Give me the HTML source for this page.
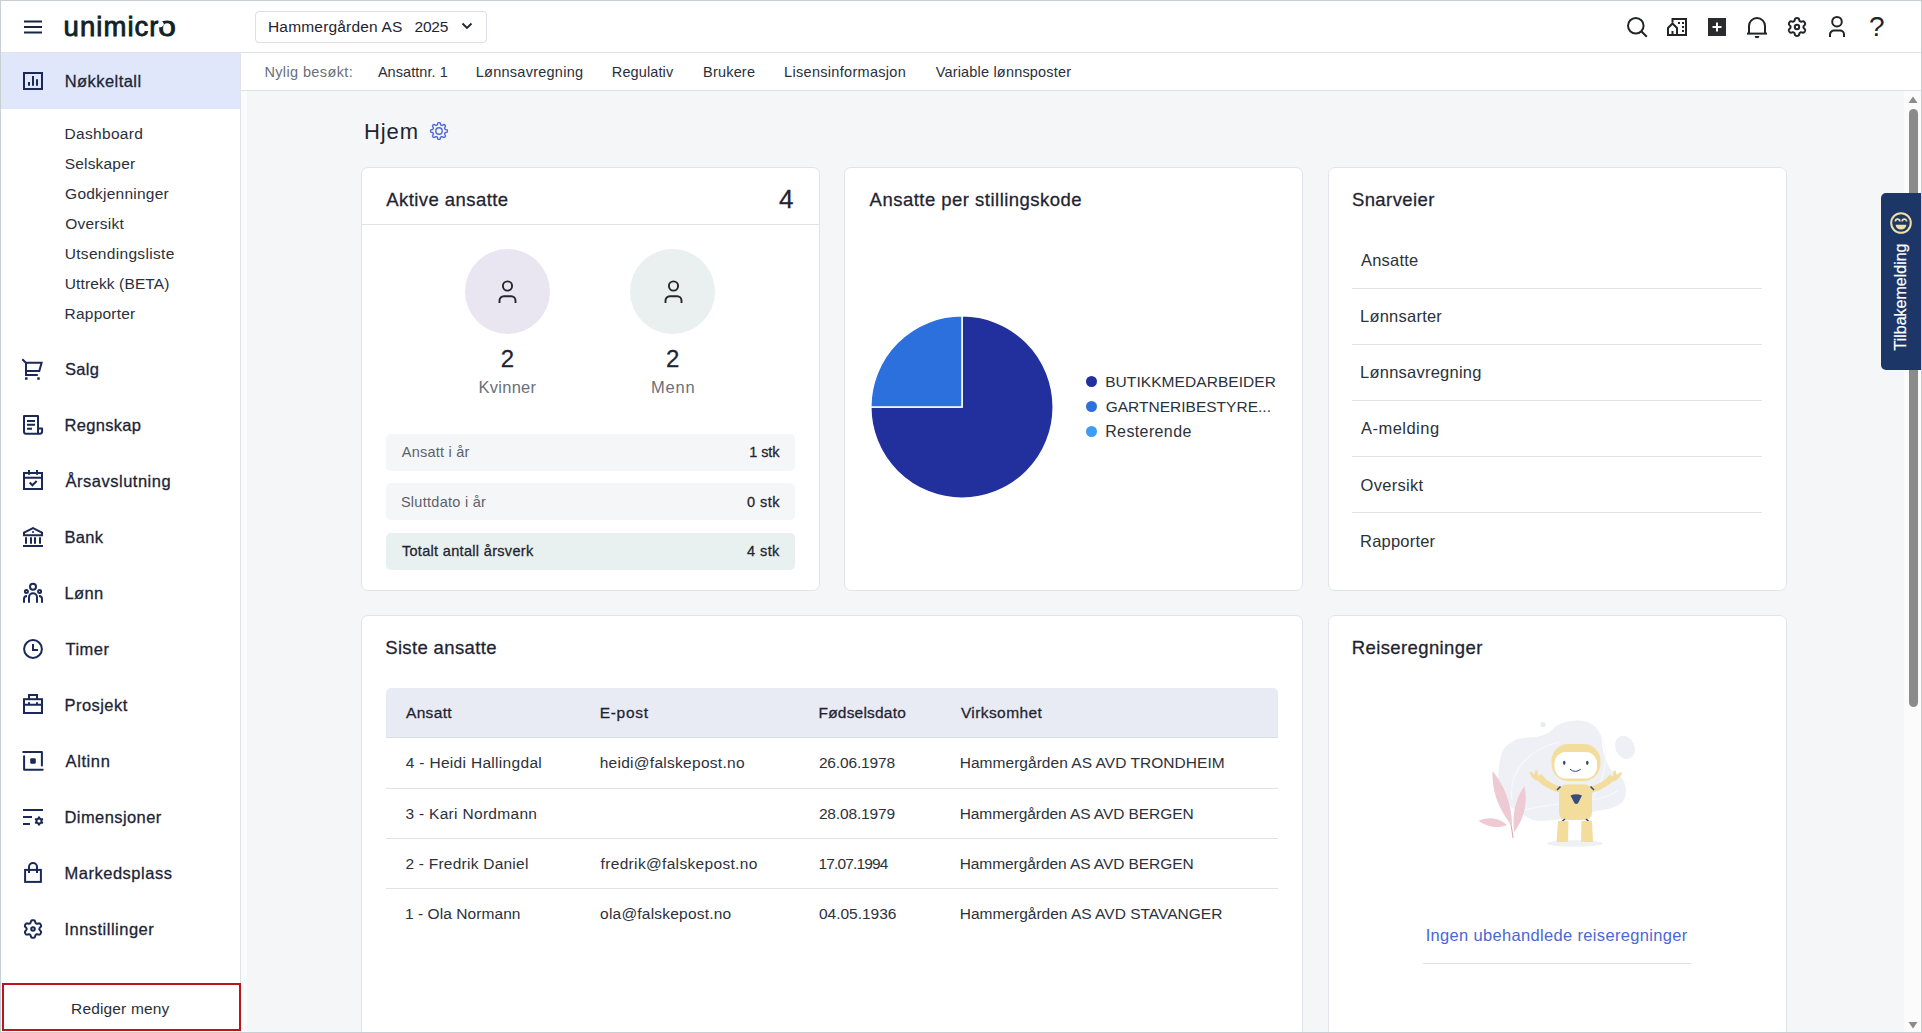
<!DOCTYPE html>
<html lang="no">
<head>
<meta charset="utf-8">
<title>Unimicro – Hjem</title>
<style>
*{box-sizing:border-box;margin:0;padding:0}
html,body{width:1922px;height:1033px;overflow:hidden;background:#fff}
body{font-family:"Liberation Sans",sans-serif;color:#1f2430}
#app{position:relative;width:1922px;height:1033px;overflow:hidden;background:#f5f6f8}
.abs,.t,svg.i{position:absolute}
.t{white-space:pre;line-height:1;font-weight:400;text-decoration:none;display:block}
h1.t{font-weight:400}
ul{list-style:none}
table{border-collapse:collapse}
th,td{padding:0;font-weight:400}
svg.i{overflow:visible}
.nv{fill:none;stroke:#1a2957;stroke-width:2}
.nf{fill:#1a2957;stroke:none}
.tb{fill:none;stroke:#222426;stroke-width:2}
.card{position:absolute;background:#fff;border:1px solid #e1e5ea;border-radius:7px}
.row{position:absolute;left:386px;width:409px;height:37px;border-radius:5px;background:#f5f6f8}
.hl{position:absolute;height:1px;background:#dfe3e8}
</style>
</head>
<body>
<div id="app">

<!-- ============ top bar ============ -->
<header class="abs" style="left:0;top:0;width:1922px;height:53px;background:#fff;border-bottom:1px solid #e0e3e7">
  <svg class="i" style="left:23px;top:20px" width="20" height="14" viewBox="0 0 20 14"><path d="M1 1.5h18M1 7h18M1 12.5h18" fill="none" stroke="#1a2540" stroke-width="2"/></svg>
  <span class="t" id="logo" style="left:63.600px;top:13px;font-size:27.500px;color:#0f2228;letter-spacing:1.050px;-webkit-text-stroke:0.850px #0f2228">unimicr<span style="display:inline-block;transform:translateX(-1.800px) scale(1.150,1.030);transform-origin:0 78%">o</span></span>
  <div class="abs" style="left:158.300px;top:21.600px;width:5.600px;height:5.400px;border-radius:50%;background:#fff;transform:rotate(-35deg)"></div>
  <div class="abs" style="left:255px;top:11px;width:232px;height:32px;border:1px solid #dcdfe4;border-radius:4px;background:#fff"></div>
  <span class="t" style="left:268.0px;top:19px;font-size:15.5px;color:#1f2430;letter-spacing:0.18px;">Hammergården AS</span>
<span class="t" style="left:414.6px;top:19px;font-size:15.5px;color:#1f2430;letter-spacing:-0.26px;">2025</span>
  <svg class="i" style="left:461px;top:22px" width="12" height="8" viewBox="0 0 12 8"><path d="M1.5 1.5 6 6l4.500-4.500" fill="none" stroke="#1f2430" stroke-width="1.8"/></svg>

  <!-- search -->
  <svg class="i" style="left:1626px;top:16px" width="22" height="22" viewBox="0 0 22 22"><circle cx="9.800" cy="9.800" r="7.800" class="tb"/><path d="M15.300 15.300 20.800 20.800" class="tb"/></svg>
  <!-- company -->
  <svg class="i" style="left:1666px;top:17px" width="22" height="20" viewBox="0 0 22 20"><path d="M6.500 5.500V2H20V18H11" class="tb"/><path d="M2 18V11L6.500 6.500 11 11V18Z" class="tb"/><path d="M5.500 18v-4h2v4z" fill="#222426"/><path d="M12 5h2v2h-2zM16 5h2v2h-2zM16 9h2v2h-2zM16 13h2v2h-2z" fill="#222426"/></svg>
  <!-- add box -->
  <svg class="i" style="left:1708px;top:18px" width="18" height="18" viewBox="0 0 18 18"><rect width="18" height="18" fill="#2a2b2d"/><path d="M9 4.500v9M4.500 9h9" stroke="#fff" stroke-width="2" fill="none"/></svg>
  <!-- bell -->
  <svg class="i" style="left:1746px;top:16px" width="22" height="23" viewBox="0 0 22 23"><path d="M3 17.600V10a8 8 0 0 1 16 0v7.600" class="tb"/><path d="M1 17.600h20" class="tb"/><path d="M8.600 20h4.800a2.400 2.200 0 0 1-4.800 0z" fill="#222426"/></svg>
  <!-- gear -->
  <svg class="i" style="left:1787px;top:17px" width="20" height="20" viewBox="-10 -10 20 20"><path d="M6.40 -0.00L6.42 -0.28L6.48 -0.57L6.61 -0.87L6.87 -1.21L7.27 -1.61L7.71 -2.07L8.02 -2.53L8.15 -2.96L8.13 -3.37L8.03 -3.75L7.89 -4.11L7.71 -4.45L7.50 -4.78L7.26 -5.08L6.98 -5.36L6.64 -5.57L6.20 -5.68L5.64 -5.64L5.03 -5.49L4.49 -5.35L4.06 -5.29L3.73 -5.33L3.45 -5.42L3.20 -5.54L2.97 -5.70L2.75 -5.89L2.55 -6.16L2.39 -6.56L2.24 -7.10L2.07 -7.71L1.82 -8.21L1.51 -8.54L1.15 -8.73L0.77 -8.83L0.39 -8.88L0.00 -8.90L-0.39 -8.88L-0.77 -8.83L-1.15 -8.73L-1.51 -8.54L-1.82 -8.21L-2.07 -7.71L-2.24 -7.10L-2.39 -6.56L-2.55 -6.16L-2.75 -5.89L-2.97 -5.70L-3.20 -5.54L-3.45 -5.42L-3.73 -5.33L-4.06 -5.29L-4.49 -5.35L-5.03 -5.49L-5.64 -5.64L-6.20 -5.68L-6.64 -5.57L-6.98 -5.36L-7.26 -5.08L-7.50 -4.78L-7.71 -4.45L-7.89 -4.11L-8.03 -3.75L-8.13 -3.37L-8.15 -2.96L-8.02 -2.53L-7.71 -2.07L-7.27 -1.61L-6.87 -1.21L-6.61 -0.87L-6.48 -0.57L-6.42 -0.28L-6.40 -0.00L-6.42 0.28L-6.48 0.57L-6.61 0.87L-6.87 1.21L-7.27 1.61L-7.71 2.07L-8.02 2.53L-8.15 2.96L-8.13 3.37L-8.03 3.75L-7.89 4.11L-7.71 4.45L-7.50 4.78L-7.26 5.08L-6.98 5.36L-6.64 5.57L-6.20 5.68L-5.64 5.64L-5.03 5.49L-4.49 5.35L-4.06 5.29L-3.73 5.33L-3.45 5.42L-3.20 5.54L-2.97 5.70L-2.75 5.89L-2.55 6.16L-2.39 6.56L-2.24 7.10L-2.07 7.71L-1.82 8.21L-1.51 8.54L-1.15 8.73L-0.77 8.83L-0.39 8.88L-0.00 8.90L0.39 8.88L0.77 8.83L1.15 8.73L1.51 8.54L1.82 8.21L2.07 7.71L2.24 7.10L2.39 6.56L2.55 6.16L2.75 5.89L2.97 5.70L3.20 5.54L3.45 5.42L3.73 5.33L4.06 5.29L4.49 5.35L5.03 5.49L5.64 5.64L6.20 5.68L6.64 5.57L6.98 5.36L7.26 5.08L7.50 4.78L7.71 4.45L7.89 4.11L8.03 3.75L8.13 3.37L8.15 2.96L8.02 2.53L7.71 2.07L7.27 1.61L6.87 1.21L6.61 0.87L6.48 0.57L6.42 0.28Z" class="tb" stroke-linejoin="round"/><circle r="2.200" class="tb"/></svg>
  <!-- user -->
  <svg class="i" style="left:1828px;top:15px" width="18" height="23" viewBox="0 0 18 23"><circle cx="9" cy="6.700" r="4.800" class="tb"/><path d="M2 22v-2.500a4 4 0 0 1 4-4h6a4 4 0 0 1 4 4V22" class="tb"/></svg>
  <!-- help -->
  <span class="t" style="left:1869px;top:12.500px;font-size:28px;color:#222426">?</span>
</header>

<!-- ============ sidebar ============ -->
<nav class="abs" style="left:0;top:0;width:241px;height:1033px">
  <div class="abs" style="left:0;top:53px;width:241px;height:980px;background:#fff;border-right:1px solid #e0e4e9"></div>
  <div class="abs" style="left:0;top:53px;width:240px;height:56px;background:#e0e7fb"></div>
  <svg class="i" style="left:23px;top:72px" width="20" height="18" viewBox="0 0 20 18"><rect x="1" y="1" width="18" height="16" class="nv"/><path d="M5 10h2v3.800H5zM9 4h2v9.800H9zM13 7.200h2v6.600h-2z" class="nf"/></svg>
  <span class="t" style="left:64.7px;top:73px;font-size:16.5px;color:#1c2436;letter-spacing:0.44px;-webkit-text-stroke:0.28px currentColor;">Nøkkeltall</span>
  <ul>
  <li><a class="t" style="left:64.6px;top:126px;font-size:15.5px;color:#2a2f3a;letter-spacing:0.30px;">Dashboard</a></li>
<li><a class="t" style="left:64.7px;top:156px;font-size:15.5px;color:#2a2f3a;letter-spacing:0.19px;">Selskaper</a></li>
<li><a class="t" style="left:65.1px;top:186px;font-size:15.5px;color:#2a2f3a;letter-spacing:0.23px;">Godkjenninger</a></li>
<li><a class="t" style="left:65.2px;top:216px;font-size:15.5px;color:#2a2f3a;letter-spacing:0.24px;">Oversikt</a></li>
<li><a class="t" style="left:64.7px;top:246px;font-size:15.5px;color:#2a2f3a;letter-spacing:0.32px;">Utsendingsliste</a></li>
<li><a class="t" style="left:64.7px;top:276px;font-size:15.5px;color:#2a2f3a;letter-spacing:0.13px;">Uttrekk (BETA)</a></li>
<li><a class="t" style="left:64.6px;top:306px;font-size:15.5px;color:#2a2f3a;letter-spacing:0.20px;">Rapporter</a></li>
  </ul>
  <ul>
  <li><a class="t" style="left:65.0px;top:361px;font-size:16.5px;color:#1c2436;letter-spacing:0.32px;-webkit-text-stroke:0.28px currentColor;">Salg</a></li>
<li><a class="t" style="left:64.5px;top:417px;font-size:16.5px;color:#1c2436;letter-spacing:0.31px;-webkit-text-stroke:0.28px currentColor;">Regnskap</a></li>
<li><a class="t" style="left:65.6px;top:473px;font-size:16.5px;color:#1c2436;letter-spacing:0.50px;-webkit-text-stroke:0.28px currentColor;">Årsavslutning</a></li>
<li><a class="t" style="left:64.5px;top:529px;font-size:16.5px;color:#1c2436;letter-spacing:0.29px;-webkit-text-stroke:0.28px currentColor;">Bank</a></li>
<li><a class="t" style="left:64.5px;top:585px;font-size:16.5px;color:#1c2436;letter-spacing:0.34px;-webkit-text-stroke:0.28px currentColor;">Lønn</a></li>
<li><a class="t" style="left:65.5px;top:641px;font-size:16.5px;color:#1c2436;letter-spacing:0.49px;-webkit-text-stroke:0.28px currentColor;">Timer</a></li>
<li><a class="t" style="left:64.5px;top:697px;font-size:16.5px;color:#1c2436;letter-spacing:0.45px;-webkit-text-stroke:0.28px currentColor;">Prosjekt</a></li>
<li><a class="t" style="left:65.6px;top:753px;font-size:16.5px;color:#1c2436;letter-spacing:0.59px;-webkit-text-stroke:0.28px currentColor;">Altinn</a></li>
<li><a class="t" style="left:64.5px;top:809px;font-size:16.5px;color:#1c2436;letter-spacing:0.41px;-webkit-text-stroke:0.28px currentColor;">Dimensjoner</a></li>
<li><a class="t" style="left:64.5px;top:865px;font-size:16.5px;color:#1c2436;letter-spacing:0.51px;-webkit-text-stroke:0.28px currentColor;">Markedsplass</a></li>
<li><a class="t" style="left:64.4px;top:921px;font-size:16.5px;color:#1c2436;letter-spacing:0.49px;-webkit-text-stroke:0.28px currentColor;">Innstillinger</a></li>
  </ul>
  <!-- Salg -->
  <svg class="i" style="left:21px;top:358px" width="23" height="23" viewBox="0 0 23 23"><path d="M1.300 1.300 4.800 4.800H20.600L18.300 12.900H5V17H16.800" class="nv"/><path d="M5 4.800V13" class="nv"/><rect x="4" y="19.200" width="2.600" height="2.600" rx=".6" class="nf"/><rect x="16.200" y="19.200" width="2.600" height="2.600" rx=".6" class="nf"/></svg>
  <!-- Regnskap -->
  <svg class="i" style="left:22px;top:414px" width="22" height="22" viewBox="0 0 22 22"><path d="M16 19.800V2H2V17.800a2 2 0 0 0 2 2H17.600a2.500 2.500 0 0 0 2.500-2.500V14.500H16" class="nv" stroke-linejoin="round"/><path d="M5 6.900h8M5 10.800h8M5 14.800h5" class="nv"/></svg>
  <!-- Arsavslutning -->
  <svg class="i" style="left:22px;top:469px" width="22" height="22" viewBox="0 0 22 22"><rect x="2" y="4" width="18" height="16" class="nv"/><path d="M2 8.800h18M7 .900v4.800M15 .900v4.800" class="nv"/><path d="M7.700 13.500 10.400 16.300 14.700 12" class="nv" stroke-width="1.800"/></svg>
  <!-- Bank -->
  <svg class="i" style="left:22px;top:526px" width="22" height="22" viewBox="0 0 22 22"><path d="M2 9.200V6.500L11 2 20 6.500V9.200Z" class="nv"/><circle cx="11" cy="6" r="1" class="nf"/><path d="M4 11.200v6.500M9 11.200v6.500M13 11.200v6.500M18 11.200v6.500" class="nv"/><path d="M1 20h20" class="nv"/></svg>
  <!-- Lonn -->
  <svg class="i" style="left:22px;top:582px" width="22" height="22" viewBox="0 0 22 22"><circle cx="11" cy="4.800" r="3" class="nv"/><circle cx="4.400" cy="9.400" r="1.500" class="nv" stroke-width="1.700"/><circle cx="17.600" cy="9.400" r="1.500" class="nv" stroke-width="1.700"/><path d="M7 20.800V15.200a4 4 0 0 1 8 0V20.800" class="nv"/><path d="M2 20.800V17a3 3 0 0 1 3-3M20 20.800V17a3 3 0 0 0-3-3" class="nv"/></svg>
  <!-- Timer -->
  <svg class="i" style="left:22px;top:638px" width="22" height="22" viewBox="0 0 22 22"><circle cx="11" cy="11" r="8.900" class="nv"/><path d="M11 6v6.100h5" class="nv"/></svg>
  <!-- Prosjekt -->
  <svg class="i" style="left:22px;top:693px" width="22" height="22" viewBox="0 0 22 22"><rect x="2" y="6.200" width="18" height="13.800" class="nv"/><path d="M7 6.200V2.100h8v4.100" class="nv"/><path d="M2 11.800h18M7 9.300v2.500M15 9.300v2.500" class="nv"/></svg>
  <!-- Altinn -->
  <svg class="i" style="left:22px;top:750px" width="22" height="22" viewBox="0 0 22 22"><path d="M1.200 2H19.900V15.600" class="nv" stroke-linecap="round" stroke-linejoin="round"/><path d="M2.100 6.200V19.700H20.700" class="nv" stroke-linecap="round" stroke-linejoin="round"/><rect x="8.200" y="8.200" width="5.600" height="5.600" rx="1.200" class="nf"/></svg>
  <!-- Dimensjoner -->
  <svg class="i" style="left:22px;top:808px" width="23" height="20" viewBox="0 0 23 20"><path d="M1 2h20M1 9h9M1 16h7" class="nv"/><g transform="translate(17 13)"><path d="M3.45 -0.00L3.46 -0.15L3.49 -0.30L3.54 -0.47L3.63 -0.64L3.76 -0.83L3.91 -1.05L4.05 -1.28L4.15 -1.51L4.18 -1.73L4.17 -1.94L4.11 -2.14L4.03 -2.32L3.91 -2.49L3.77 -2.64L3.59 -2.76L3.38 -2.84L3.13 -2.87L2.86 -2.86L2.60 -2.84L2.37 -2.82L2.17 -2.83L2.01 -2.87L1.86 -2.92L1.73 -2.99L1.60 -3.07L1.48 -3.17L1.37 -3.30L1.26 -3.46L1.16 -3.67L1.05 -3.91L0.92 -4.15L0.77 -4.35L0.59 -4.49L0.40 -4.58L0.20 -4.63L0.00 -4.65L-0.20 -4.63L-0.40 -4.58L-0.59 -4.49L-0.77 -4.35L-0.92 -4.15L-1.05 -3.91L-1.16 -3.67L-1.26 -3.46L-1.37 -3.30L-1.48 -3.17L-1.60 -3.07L-1.72 -2.99L-1.86 -2.92L-2.01 -2.87L-2.17 -2.83L-2.37 -2.82L-2.60 -2.84L-2.86 -2.86L-3.13 -2.87L-3.38 -2.84L-3.59 -2.76L-3.77 -2.64L-3.91 -2.49L-4.03 -2.33L-4.11 -2.14L-4.17 -1.94L-4.18 -1.73L-4.15 -1.51L-4.05 -1.28L-3.91 -1.05L-3.76 -0.83L-3.63 -0.64L-3.54 -0.47L-3.49 -0.30L-3.46 -0.15L-3.45 -0.00L-3.46 0.15L-3.49 0.30L-3.54 0.47L-3.63 0.64L-3.76 0.83L-3.91 1.05L-4.05 1.28L-4.15 1.51L-4.18 1.73L-4.17 1.94L-4.11 2.14L-4.03 2.33L-3.91 2.49L-3.77 2.64L-3.59 2.76L-3.38 2.84L-3.13 2.87L-2.86 2.86L-2.60 2.84L-2.37 2.82L-2.17 2.83L-2.01 2.87L-1.86 2.92L-1.73 2.99L-1.60 3.07L-1.48 3.17L-1.37 3.30L-1.26 3.46L-1.16 3.67L-1.05 3.91L-0.92 4.15L-0.77 4.35L-0.59 4.49L-0.40 4.58L-0.20 4.63L-0.00 4.65L0.20 4.63L0.40 4.58L0.59 4.49L0.77 4.35L0.92 4.15L1.05 3.91L1.16 3.67L1.26 3.46L1.37 3.30L1.48 3.17L1.60 3.07L1.72 2.99L1.86 2.92L2.01 2.87L2.17 2.83L2.37 2.82L2.60 2.84L2.86 2.86L3.13 2.87L3.38 2.84L3.59 2.76L3.77 2.64L3.91 2.49L4.03 2.32L4.11 2.14L4.17 1.94L4.18 1.73L4.15 1.51L4.05 1.28L3.91 1.05L3.76 0.83L3.63 0.64L3.54 0.47L3.49 0.30L3.46 0.15ZM1.55 0A1.55 1.55 0 1 0 -1.55 0A1.55 1.55 0 1 0 1.55 0Z" class="nf" fill-rule="evenodd"/></g></svg>
  <!-- Markedsplass -->
  <svg class="i" style="left:22px;top:861px" width="22" height="23" viewBox="0 0 22 23"><rect x="3.100" y="8.900" width="15.800" height="12" class="nv"/><path d="M7 12V6.100a4 4 0 0 1 8 0V12" class="nv"/></svg>
  <!-- Innstillinger -->
  <svg class="i" style="left:23px;top:919px" width="20" height="20" viewBox="-10 -10 20 20"><path d="M6.35 -0.00L6.37 -0.28L6.43 -0.56L6.56 -0.86L6.82 -1.20L7.22 -1.60L7.66 -2.05L7.97 -2.51L8.10 -2.95L8.09 -3.35L7.99 -3.73L7.84 -4.08L7.66 -4.42L7.46 -4.75L7.22 -5.06L6.94 -5.33L6.60 -5.54L6.16 -5.65L5.61 -5.61L5.00 -5.45L4.45 -5.31L4.03 -5.25L3.70 -5.28L3.42 -5.37L3.18 -5.50L2.94 -5.65L2.73 -5.85L2.53 -6.12L2.37 -6.51L2.22 -7.05L2.05 -7.66L1.81 -8.16L1.50 -8.49L1.14 -8.68L0.77 -8.78L0.39 -8.83L0.00 -8.85L-0.39 -8.83L-0.77 -8.78L-1.14 -8.68L-1.50 -8.49L-1.81 -8.16L-2.05 -7.66L-2.22 -7.05L-2.37 -6.51L-2.53 -6.12L-2.73 -5.85L-2.94 -5.65L-3.17 -5.50L-3.42 -5.37L-3.70 -5.28L-4.03 -5.25L-4.45 -5.31L-5.00 -5.45L-5.61 -5.61L-6.16 -5.65L-6.60 -5.54L-6.94 -5.33L-7.22 -5.06L-7.46 -4.75L-7.66 -4.43L-7.84 -4.08L-7.99 -3.73L-8.09 -3.35L-8.10 -2.95L-7.97 -2.51L-7.66 -2.05L-7.22 -1.60L-6.82 -1.20L-6.56 -0.86L-6.43 -0.56L-6.37 -0.28L-6.35 -0.00L-6.37 0.28L-6.43 0.56L-6.56 0.86L-6.82 1.20L-7.22 1.60L-7.66 2.05L-7.97 2.51L-8.10 2.95L-8.09 3.35L-7.99 3.73L-7.84 4.08L-7.66 4.43L-7.46 4.75L-7.22 5.06L-6.94 5.33L-6.60 5.54L-6.16 5.65L-5.61 5.61L-5.00 5.45L-4.45 5.31L-4.03 5.25L-3.70 5.28L-3.42 5.37L-3.18 5.50L-2.94 5.65L-2.73 5.85L-2.53 6.12L-2.37 6.51L-2.22 7.05L-2.05 7.66L-1.81 8.16L-1.50 8.49L-1.14 8.68L-0.77 8.78L-0.39 8.83L-0.00 8.85L0.39 8.83L0.77 8.78L1.14 8.68L1.50 8.49L1.81 8.16L2.05 7.66L2.22 7.05L2.37 6.51L2.53 6.12L2.73 5.85L2.94 5.65L3.17 5.50L3.42 5.37L3.70 5.28L4.03 5.25L4.45 5.31L5.00 5.45L5.61 5.61L6.16 5.65L6.60 5.54L6.94 5.33L7.22 5.06L7.46 4.75L7.66 4.42L7.84 4.08L7.99 3.73L8.09 3.35L8.10 2.95L7.97 2.51L7.66 2.05L7.22 1.60L6.82 1.20L6.56 0.86L6.43 0.56L6.37 0.28Z" class="nv" stroke-linejoin="round"/><circle r="1.800" class="nv" stroke-width="1.800"/></svg>

  <div class="abs" style="left:2px;top:983px;width:239px;height:48px;border:2px solid #b9151b;background:#fff"></div>
  <span class="t" style="left:71.1px;top:1001px;font-size:15.5px;color:#2a2f3a;letter-spacing:0.15px;">Rediger meny</span>
</nav>

<!-- ============ recent bar ============ -->
<div class="abs" id="recent" style="left:0;top:0">
<div class="abs" style="left:241px;top:53px;width:1681px;height:38px;background:#fff;border-bottom:1px solid #dde0e4"></div>
<span class="t" style="left:264.4px;top:65px;font-size:14.5px;color:#6a6f78;letter-spacing:0.38px;">Nylig besøkt:</span>
<a class="t" style="left:377.9px;top:65px;font-size:14.5px;color:#2a2f3a;letter-spacing:0.06px;">Ansattnr. 1</a>
<a class="t" style="left:475.8px;top:65px;font-size:14.5px;color:#2a2f3a;letter-spacing:0.25px;">Lønnsavregning</a>
<a class="t" style="left:611.8px;top:65px;font-size:14.5px;color:#2a2f3a;letter-spacing:0.11px;">Regulativ</a>
<a class="t" style="left:703.1px;top:65px;font-size:14.5px;color:#2a2f3a;letter-spacing:0.18px;">Brukere</a>
<a class="t" style="left:784.1px;top:65px;font-size:14.5px;color:#2a2f3a;letter-spacing:0.30px;">Lisensinformasjon</a>
<a class="t" style="left:935.7px;top:65px;font-size:14.5px;color:#2a2f3a;letter-spacing:0.18px;">Variable lønnsposter</a>
</div>

<div class="abs" style="left:241px;top:91px;width:6px;height:942px;background:#fafbfc"></div>
<!-- ============ main ============ -->
<main class="abs" style="left:0;top:0">
  <h1 class="t" style="left:364.0px;top:121px;font-size:22px;color:#1f2430;letter-spacing:0.90px;">Hjem</h1>
  <svg class="i" style="left:429px;top:121px" width="20" height="20" viewBox="-10 -10 20 20"><path d="M8.40 -0.00L8.38 -0.37L8.32 -0.73L8.13 -1.07L7.59 -1.34L6.73 -1.49L6.18 -1.66L5.96 -1.88L5.83 -2.12L5.73 -2.37L5.63 -2.62L5.54 -2.88L5.54 -3.20L5.81 -3.70L6.32 -4.42L6.51 -4.99L6.40 -5.37L6.19 -5.67L5.94 -5.94L5.67 -6.19L5.37 -6.40L4.99 -6.51L4.42 -6.32L3.70 -5.81L3.20 -5.54L2.88 -5.54L2.62 -5.63L2.37 -5.73L2.12 -5.83L1.88 -5.96L1.66 -6.18L1.49 -6.73L1.34 -7.59L1.07 -8.13L0.73 -8.32L0.37 -8.38L0.00 -8.40L-0.37 -8.38L-0.73 -8.32L-1.07 -8.13L-1.34 -7.59L-1.49 -6.73L-1.66 -6.18L-1.88 -5.96L-2.12 -5.83L-2.37 -5.73L-2.62 -5.63L-2.88 -5.54L-3.20 -5.54L-3.70 -5.81L-4.42 -6.32L-4.99 -6.51L-5.37 -6.40L-5.67 -6.19L-5.94 -5.94L-6.19 -5.67L-6.40 -5.37L-6.51 -4.99L-6.32 -4.42L-5.81 -3.70L-5.54 -3.20L-5.54 -2.88L-5.63 -2.62L-5.73 -2.37L-5.83 -2.12L-5.96 -1.88L-6.18 -1.66L-6.73 -1.49L-7.59 -1.34L-8.13 -1.07L-8.32 -0.73L-8.38 -0.37L-8.40 -0.00L-8.38 0.37L-8.32 0.73L-8.13 1.07L-7.59 1.34L-6.73 1.49L-6.18 1.66L-5.96 1.88L-5.83 2.12L-5.73 2.37L-5.63 2.62L-5.54 2.88L-5.54 3.20L-5.81 3.70L-6.32 4.42L-6.51 4.99L-6.40 5.37L-6.19 5.67L-5.94 5.94L-5.67 6.19L-5.37 6.40L-4.99 6.51L-4.42 6.32L-3.70 5.81L-3.20 5.54L-2.88 5.54L-2.62 5.63L-2.37 5.73L-2.12 5.83L-1.88 5.96L-1.66 6.18L-1.49 6.73L-1.34 7.59L-1.07 8.13L-0.73 8.32L-0.37 8.38L-0.00 8.40L0.37 8.38L0.73 8.32L1.07 8.13L1.34 7.59L1.49 6.73L1.66 6.18L1.88 5.96L2.12 5.83L2.37 5.73L2.62 5.63L2.88 5.54L3.20 5.54L3.70 5.81L4.42 6.32L4.99 6.51L5.37 6.40L5.67 6.19L5.94 5.94L6.19 5.67L6.40 5.37L6.51 4.99L6.32 4.42L5.81 3.70L5.54 3.20L5.54 2.88L5.63 2.62L5.73 2.37L5.83 2.12L5.96 1.88L6.18 1.66L6.73 1.49L7.59 1.34L8.13 1.07L8.32 0.73L8.38 0.37Z" fill="none" stroke="#5468d4" stroke-width="1.400" stroke-linejoin="round"/><circle r="3.200" fill="none" stroke="#5468d4" stroke-width="1.400"/></svg>

  <!-- card 1 -->
  <section class="card" style="left:361px;top:167px;width:459px;height:424px"></section>
  <div class="hl" style="left:362px;top:224px;width:457px"></div>
  <span class="t" style="left:386.2px;top:191px;font-size:18.5px;color:#1f2430;letter-spacing:0.44px;-webkit-text-stroke:0.28px currentColor;">Aktive ansatte</span>
<span class="t" style="left:779.1px;top:186px;font-size:26px;color:#1f2430;-webkit-text-stroke:0.28px currentColor;">4</span>
  <div class="abs" style="left:465px;top:249px;width:85px;height:85px;border-radius:50%;background:#e9e5f1"></div>
  <div class="abs" style="left:630px;top:249px;width:85px;height:85px;border-radius:50%;background:#e9f0ef"></div>
  <svg class="i" style="left:498px;top:280px" width="19" height="24" viewBox="0 0 19 24"><circle cx="9.500" cy="6" r="4.600" fill="none" stroke="#25272b" stroke-width="1.900"/><path d="M1.500 23v-2.500a4.300 4.300 0 0 1 4.300-4.300h7.400a4.300 4.300 0 0 1 4.300 4.300V23" fill="none" stroke="#25272b" stroke-width="1.900"/></svg>
  <svg class="i" style="left:663.500px;top:280px" width="19" height="24" viewBox="0 0 19 24"><circle cx="9.500" cy="6" r="4.600" fill="none" stroke="#25272b" stroke-width="1.900"/><path d="M1.500 23v-2.500a4.300 4.300 0 0 1 4.300-4.300h7.400a4.300 4.300 0 0 1 4.300 4.300V23" fill="none" stroke="#25272b" stroke-width="1.900"/></svg>
  <span class="t" style="left:500.7px;top:347px;font-size:24px;color:#1f2430;-webkit-text-stroke:0.28px currentColor;">2</span>
<span class="t" style="left:666.0px;top:347px;font-size:24px;color:#1f2430;-webkit-text-stroke:0.28px currentColor;">2</span>
<span class="t" style="left:478.6px;top:379px;font-size:16.5px;color:#6b7078;letter-spacing:0.24px;">Kvinner</span>
<span class="t" style="left:651.0px;top:379px;font-size:16.5px;color:#6b7078;letter-spacing:0.79px;">Menn</span>
  <div class="row" style="top:434px"></div>
  <div class="row" style="top:483.300px"></div>
  <div class="row" style="top:532.600px;background:#e9f0f0"></div>
  <span class="t" style="left:401.8px;top:445px;font-size:14.5px;color:#5d6168;letter-spacing:0.22px;">Ansatt i år</span>
<span class="t" style="left:749.3px;top:445px;font-size:14.5px;color:#1f2430;letter-spacing:-0.13px;-webkit-text-stroke:0.28px currentColor;">1 stk</span>
<span class="t" style="left:400.9px;top:495px;font-size:14.5px;color:#5d6168;letter-spacing:0.28px;">Sluttdato i år</span>
<span class="t" style="left:746.9px;top:495px;font-size:14.5px;color:#1f2430;letter-spacing:0.47px;-webkit-text-stroke:0.28px currentColor;">0 stk</span>
<span class="t" style="left:401.9px;top:544px;font-size:14.5px;color:#1f2430;letter-spacing:0.32px;-webkit-text-stroke:0.28px currentColor;">Totalt antall årsverk</span>
<span class="t" style="left:747.1px;top:544px;font-size:14.5px;color:#1f2430;letter-spacing:0.41px;-webkit-text-stroke:0.28px currentColor;">4 stk</span>

  <!-- card 2 -->
  <section class="card" style="left:844px;top:167px;width:459px;height:424px"></section>
  <span class="t" style="left:869.6px;top:191px;font-size:18.5px;color:#1f2430;letter-spacing:0.48px;-webkit-text-stroke:0.28px currentColor;">Ansatte per stillingskode</span>
  <svg class="i" style="left:865.800px;top:311.200px" width="192" height="192" viewBox="-96 -96 192 192">
    <path d="M0 0V-91.200A91.200 91.200 0 1 1-91.200 0Z" fill="#21309d" stroke="#fff" stroke-width="1.500"/>
    <path d="M0 0H-91.200A91.200 91.200 0 0 1 0-91.200Z" fill="#2b70dd" stroke="#fff" stroke-width="1.500"/>
  </svg>
  <div class="abs" style="left:1086px;top:376px;width:11px;height:11px;border-radius:50%;background:#21309d"></div>
  <div class="abs" style="left:1086px;top:401px;width:11px;height:11px;border-radius:50%;background:#2b70dd"></div>
  <div class="abs" style="left:1086px;top:426px;width:11px;height:11px;border-radius:50%;background:#3f9cf4"></div>
  <span class="t" style="left:1105.2px;top:374px;font-size:15.5px;color:#2c313a;letter-spacing:0.07px;">BUTIKKMEDARBEIDER</span>
<span class="t" style="left:1105.7px;top:399px;font-size:15.5px;color:#2c313a;letter-spacing:0.01px;">GARTNERIBESTYRE...</span>
<span class="t" style="left:1105.2px;top:424px;font-size:16px;color:#2c313a;letter-spacing:0.38px;">Resterende</span>

  <!-- card 3 -->
  <section class="card" style="left:1328px;top:167px;width:459px;height:424px"></section>
  <span class="t" style="left:1351.9px;top:191px;font-size:18.5px;color:#1f2430;letter-spacing:0.42px;-webkit-text-stroke:0.28px currentColor;">Snarveier</span>
<span class="t" style="left:1361.1px;top:252px;font-size:16.5px;color:#2c313a;letter-spacing:0.17px;">Ansatte</span>
<span class="t" style="left:1360.0px;top:308px;font-size:16.5px;color:#2c313a;letter-spacing:0.23px;">Lønnsarter</span>
<span class="t" style="left:1360.0px;top:364px;font-size:16.5px;color:#2c313a;letter-spacing:0.24px;">Lønnsavregning</span>
<span class="t" style="left:1361.1px;top:420px;font-size:16.5px;color:#2c313a;letter-spacing:0.46px;">A-melding</span>
<span class="t" style="left:1360.6px;top:477px;font-size:16.5px;color:#2c313a;letter-spacing:0.27px;">Oversikt</span>
<span class="t" style="left:1360.0px;top:533px;font-size:16.5px;color:#2c313a;letter-spacing:0.21px;">Rapporter</span>
  <div class="hl" style="left:1352px;top:288px;width:410px"></div>
  <div class="hl" style="left:1352px;top:344px;width:410px"></div>
  <div class="hl" style="left:1352px;top:400px;width:410px"></div>
  <div class="hl" style="left:1352px;top:456px;width:410px"></div>
  <div class="hl" style="left:1352px;top:512px;width:410px"></div>

  <!-- card 4 -->
  <section class="card" style="left:361px;top:615px;width:942px;height:440px"></section>
  <span class="t" style="left:385.2px;top:639px;font-size:18.5px;color:#1f2430;letter-spacing:0.36px;-webkit-text-stroke:0.28px currentColor;">Siste ansatte</span>
  <div class="abs" style="left:386px;top:688px;width:892px;height:50px;background:#e8ebf4;border-radius:5px 5px 0 0;border-bottom:1px solid #dadee6"></div>
  <div class="hl" style="left:386px;top:788px;width:892px"></div>
  <div class="hl" style="left:386px;top:838px;width:892px"></div>
  <div class="hl" style="left:386px;top:888px;width:892px"></div>
  <table class="abs" style="left:0;top:0"><thead><tr>
  <th><span class="t" style="left:406.0px;top:705px;font-size:15.5px;color:#1f2430;letter-spacing:0.33px;-webkit-text-stroke:0.28px currentColor;">Ansatt</span></th>
<th><span class="t" style="left:599.7px;top:705px;font-size:15.5px;color:#1f2430;letter-spacing:0.69px;-webkit-text-stroke:0.28px currentColor;">E-post</span></th>
<th><span class="t" style="left:818.5px;top:705px;font-size:15.5px;color:#1f2430;letter-spacing:0.20px;-webkit-text-stroke:0.28px currentColor;">Fødselsdato</span></th>
<th><span class="t" style="left:960.9px;top:705px;font-size:15.5px;color:#1f2430;letter-spacing:0.41px;-webkit-text-stroke:0.28px currentColor;">Virksomhet</span></th>
  </tr></thead><tbody>
  <tr><td><span class="t" style="left:405.8px;top:755px;font-size:15.5px;color:#2c313a;letter-spacing:0.31px;">4 - Heidi Hallingdal</span></td><td><span class="t" style="left:599.7px;top:755px;font-size:15.5px;color:#2c313a;letter-spacing:0.28px;">heidi@falskepost.no</span></td><td><span class="t" style="left:818.9px;top:755px;font-size:15.5px;color:#2c313a;letter-spacing:-0.16px;">26.06.1978</span></td><td><span class="t" style="left:959.7px;top:755px;font-size:15.5px;color:#2c313a;letter-spacing:0.04px;">Hammergården AS AVD TRONDHEIM</span></td></tr>
<tr><td><span class="t" style="left:405.4px;top:806px;font-size:15.5px;color:#2c313a;letter-spacing:0.31px;">3 - Kari Nordmann</span></td><td><span class="t" style="left:818.9px;top:806px;font-size:15.5px;color:#2c313a;letter-spacing:-0.16px;">28.08.1979</span></td><td><span class="t" style="left:959.7px;top:806px;font-size:15.5px;color:#2c313a;letter-spacing:-0.07px;">Hammergården AS AVD BERGEN</span></td></tr>
<tr><td><span class="t" style="left:405.4px;top:856px;font-size:15.5px;color:#2c313a;letter-spacing:0.24px;">2 - Fredrik Daniel</span></td><td><span class="t" style="left:600.6px;top:856px;font-size:15.5px;color:#2c313a;letter-spacing:0.33px;">fredrik@falskepost.no</span></td><td><span class="t" style="left:818.4px;top:856px;font-size:15.5px;color:#2c313a;letter-spacing:-0.85px;">17.07.1994</span></td><td><span class="t" style="left:959.7px;top:856px;font-size:15.5px;color:#2c313a;letter-spacing:-0.07px;">Hammergården AS AVD BERGEN</span></td></tr>
<tr><td><span class="t" style="left:404.9px;top:906px;font-size:15.5px;color:#2c313a;letter-spacing:0.07px;">1 - Ola Normann</span></td><td><span class="t" style="left:600.1px;top:906px;font-size:15.5px;color:#2c313a;letter-spacing:0.21px;">ola@falskepost.no</span></td><td><span class="t" style="left:819.0px;top:906px;font-size:15.5px;color:#2c313a;letter-spacing:-0.02px;">04.05.1936</span></td><td><span class="t" style="left:959.7px;top:906px;font-size:15.5px;color:#2c313a;letter-spacing:0.01px;">Hammergården AS AVD STAVANGER</span></td></tr>
  </tbody></table>

  <!-- card 5 -->
  <section class="card" style="left:1328px;top:615px;width:459px;height:440px"></section>
  <span class="t" style="left:1351.7px;top:639px;font-size:18.5px;color:#1f2430;letter-spacing:0.40px;-webkit-text-stroke:0.28px currentColor;">Reiseregninger</span>
  <svg class="i" style="left:1470px;top:712px" width="180" height="145" viewBox="1470 712 180 145">
    <path d="M1498.1 777.4C1498.6 770.9 1499.3 758.4 1502.3 752.1C1505.3 745.8 1510.4 742.1 1516.3 739.5C1522.2 736.9 1532.0 737.9 1537.4 736.7C1542.8 735.5 1544.8 734.6 1548.6 732.5C1552.3 730.4 1554.8 726.0 1559.9 724.0C1565.1 722.0 1573.9 720.3 1579.5 720.5C1585.1 720.7 1590.1 722.9 1593.6 725.4C1597.1 727.9 1599.0 730.8 1600.6 735.3C1602.2 739.8 1601.8 746.5 1603.4 752.1C1605.0 757.7 1607.4 764.8 1610.4 769.0C1613.4 773.2 1619.0 774.1 1621.6 777.4C1624.2 780.7 1625.7 784.6 1625.9 788.6C1626.1 792.6 1625.6 798.0 1623.0 801.3C1620.4 804.6 1614.8 806.7 1610.4 808.3C1606.0 809.9 1603.4 809.5 1596.4 811.1C1589.4 812.7 1577.7 816.5 1568.3 818.1C1558.9 819.7 1547.2 821.1 1540.2 820.9C1533.2 820.7 1531.4 819.3 1526.2 816.7C1521.0 814.1 1513.8 809.7 1509.3 805.5C1504.8 801.3 1501.4 796.1 1499.5 791.4C1497.6 786.7 1497.6 783.9 1498.1 777.4Z" fill="#eef0f5"/>
    <path d="M1512 800C1508 770 1530 748 1560 742M1520 812C1550 800 1600 806 1618 790M1598 730C1612 750 1606 790 1580 812" fill="none" stroke="#f7f8fb" stroke-width="1.200"/>
    <ellipse cx="1625" cy="747.500" rx="9.500" ry="12" transform="rotate(-25 1625 747.500)" fill="#eef0f5"/>
    <circle cx="1543" cy="724.500" r="2.600" fill="#e6e9f0"/>
    <ellipse cx="1575" cy="843.500" rx="28" ry="3.200" fill="#eef0f4"/>
    <!-- plant -->
    <path d="M1513 838C1511 822 1508 806 1503 794" fill="none" stroke="#d9a3b3" stroke-width="1"/>
    <path d="M1512 826C1496 806 1492 788 1492.500 771C1503 784 1512 802 1512 826Z" fill="#eecbd4"/>
    <path d="M1514 832C1512 812 1516 798 1524.500 786C1528 802 1524 820 1514 832Z" fill="#eecbd4"/>
    <path d="M1507 825C1498 829 1487 827 1478.500 821C1488 816 1500 818 1507 825Z" fill="#eecbd4"/>
    <!-- robot -->
    <path d="M1561 793C1552 791 1543 786 1537.500 780.500C1534 780 1531 777 1529.500 772.500L1531 771.500L1534.500 774.500L1535.500 770L1537.500 770.500L1538 776L1541.500 774L1542.500 775.500C1547 781 1554 785 1561 786.500Z" fill="#f3dd9c"/>
    <path d="M1590.500 793C1599 791 1607 787 1612.500 781.500C1616.500 781 1620 777.500 1622 773L1620.500 772L1616.500 775L1615.500 770.500L1613.500 771L1613 776.500L1609.500 774.500L1608.500 776C1604 781.500 1597 785 1590.500 786.500Z" fill="#f3dd9c"/>
    <rect x="1551.500" y="744" width="49" height="37" rx="17" fill="#f3dd9c"/>
    <rect x="1554.500" y="752" width="42.500" height="26.500" rx="11.500" fill="#fff"/>
    <ellipse cx="1564.200" cy="762.800" rx="1.300" ry="2.100" fill="#3a4a7a"/>
    <ellipse cx="1587.300" cy="762.800" rx="1.300" ry="2.100" fill="#3a4a7a"/>
    <path d="M1570 769.200Q1575.400 773.600 1580.800 769.200" fill="none" stroke="#3a4a7a" stroke-width="1"/>
    <rect x="1559" y="784.500" width="33" height="35.500" rx="7" fill="#f3dd9c"/>
    <path d="M1570.500 795.500Q1576.200 793.200 1582 795.500L1578 803.200Q1576.200 804.600 1574.500 803.200Z" fill="#3a4a7a"/>
    <path d="M1557 790l3.500-3.500M1594 790l-3.500-3.500M1561.500 822l3.500-3M1589.500 822l-3.500-3" stroke="#3a4a7a" stroke-width="1.600" fill="none"/>
    <path d="M1558 821h10.500l-.5 21h-11.500z" fill="#f3dd9c"/>
    <path d="M1581.500 821h10.500l1 21h-12z" fill="#f3dd9c"/>
  </svg>
  <span class="t" style="left:1425.7px;top:927px;font-size:16.5px;color:#4a67d6;letter-spacing:0.33px;">Ingen ubehandlede reiseregninger</span>
  <div class="hl" style="left:1423px;top:963px;width:268px"></div>
</main>

<!-- ============ scrollbar + feedback ============ -->
<div class="abs" style="left:1904px;top:91px;width:17px;height:942px;background:#fbfbfc"></div>
<svg class="i" style="left:1908.200px;top:96px" width="10" height="8" viewBox="0 0 10 8"><path d="M5 .500 9.500 7H.500Z" fill="#8b8b8b"/></svg>
<svg class="i" style="left:1908.200px;top:1021px" width="10" height="8" viewBox="0 0 10 8"><path d="M5 7.500 9.500 1H.500Z" fill="#8b8b8b"/></svg>
<div class="abs" style="left:1909px;top:109px;width:9px;height:598px;border-radius:4.500px;background:#8b8b8b"></div>
<aside class="abs" style="left:1881px;top:193px;width:41px;height:177px;background:#1c3668;border-radius:5px 0 0 5px">
  <svg class="i" style="left:8.700px;top:18.600px" width="22" height="22" viewBox="-11 -11 22 22"><circle r="9.800" fill="none" stroke="#f1e0a3" stroke-width="2"/><path d="M-5.600-1.600a2.200 2.200 0 0 1 4.400 0M1.200-1.600a2.200 2.200 0 0 1 4.400 0" fill="none" stroke="#f1e0a3" stroke-width="1.700"/><path d="M-5.400 1.800h10.800a5.400 4.800 0 0 1-10.800 0z" fill="#f1e0a3"/></svg>
  <span class="t" style="left:20.400px;top:104px;font-size:16px;color:#fff;transform:translate(-50%,-50%) rotate(-90deg);-webkit-text-stroke:0.200px #fff">Tilbakemelding</span>
</aside>
<div class="abs" style="left:0;top:0;width:1922px;height:1px;background:#c9ced3"></div>
<div class="abs" style="left:0;top:0;width:1px;height:1033px;background:#c9ced3"></div>
<div class="abs" style="left:1921px;top:0;width:1px;height:1033px;background:#c9ced3"></div>
<div class="abs" style="left:0;top:1032px;width:1922px;height:1px;background:#c9ced3"></div>
</div>
</body>
</html>
